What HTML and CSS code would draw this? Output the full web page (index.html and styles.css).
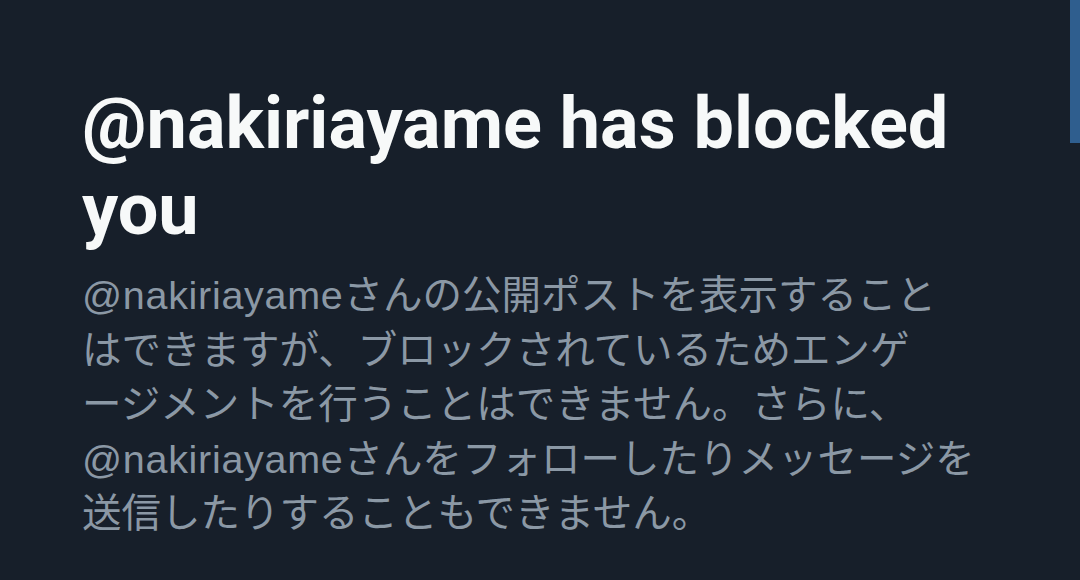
FILE: index.html
```html
<!DOCTYPE html>
<html lang="ja">
<head>
<meta charset="utf-8">
<title>Blocked</title>
<link rel="stylesheet" href="styles.css">
</head>
<body>
<div class="page">
  <main class="content">
    <h1 class="title">@nakiriayame has blocked<br>you</h1>
    <p class="desc"><span class="lat">@nakiriayame</span>さんの公開ポストを表示すること<br>はできますが、ブロックされているためエンゲ<br>ージメントを行うことはできません。さらに、<br><span class="lat">@nakiriayame</span>さんをフォローしたりメッセージを<br>送信したりすることもできません。</p>
  </main>
  <div class="scrollbar"></div>
</div>
</body>
</html>
```

FILE: styles.css
```css
html, body {
  margin: 0;
  padding: 0;
  background: #171f2a;
}
.page {
  position: relative;
  width: 1080px;
  height: 580px;
  overflow: hidden;
  background: #171f2a;
}
.content {
  padding: 81px 0 0 82px;
}
.title {
  margin: 0;
  font-family: Roboto, "Liberation Sans", Arial, sans-serif;
  font-weight: 700;
  font-size: 72px;
  line-height: 86px;
  color: #f7f9f9;
}
.desc {
  margin: 15px 0 0 0;
  font-family: "Liberation Sans", "Noto Sans CJK JP", sans-serif;
  font-size: 39.5px;
  line-height: 54.5px;
  color: #8b98a5;
  white-space: nowrap;
}
.lat {
  letter-spacing: 0.7px;
}
.scrollbar {
  position: absolute;
  top: 0;
  right: 0;
  width: 10px;
  height: 143px;
  background: #2f5e8e;
}
```
